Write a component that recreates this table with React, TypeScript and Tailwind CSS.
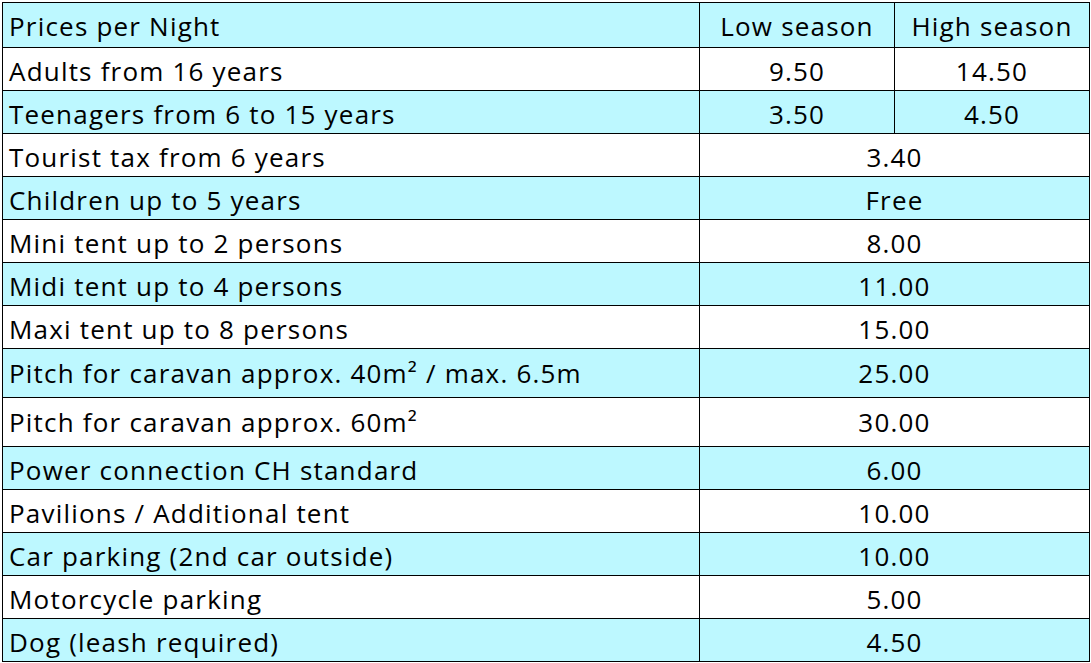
import React from "react";

type Row = { label: string; low: string; high?: string; tall?: boolean };

const rows: Row[] = [
  { label: "Adults from 16 years", low: "9.50", high: "14.50" },
  { label: "Teenagers from 6 to 15 years", low: "3.50", high: "4.50" },
  { label: "Tourist tax from 6 years", low: "3.40" },
  { label: "Children up to 5 years", low: "Free" },
  { label: "Mini tent up to 2 persons", low: "8.00" },
  { label: "Midi tent up to 4 persons", low: "11.00" },
  { label: "Maxi tent up to 8 persons", low: "15.00" },
  { label: "Pitch for caravan approx. 40m² / max. 6.5m", low: "25.00", tall: true },
  { label: "Pitch for caravan approx. 60m²", low: "30.00", tall: true },
  { label: "Power connection CH standard", low: "6.00" },
  { label: "Pavilions / Additional tent", low: "10.00" },
  { label: "Car parking (2nd car outside)", low: "10.00" },
  { label: "Motorcycle parking", low: "5.00" },
  { label: "Dog (leash required)", low: "4.50" },
];

export default function App() {
  return (
    <div className="min-h-screen bg-white pl-[2px] pt-[2px]">
      <div
        className="grid w-[1088px] grid-cols-[696px_194px_194px] gap-px bg-black p-px text-[26px] leading-[30px] tracking-[1.2px] text-black"
        style={{ fontFamily: "'Open Sans', 'Liberation Sans', sans-serif" }}
      >
        <div className="h-[44px] bg-[#bdf8ff] pl-[6px] pt-[8px]">Prices per Night</div>
        <div className="h-[44px] bg-[#bdf8ff] pt-[8px] text-center">Low season</div>
        <div className="h-[44px] bg-[#bdf8ff] pt-[8px] text-center">High season</div>
        {rows.map((r, i) => {
          const bg = i % 2 === 0 ? "bg-white" : "bg-[#bdf8ff]";
          const h = r.tall ? "h-[48px] pt-[9px]" : "h-[42px] pt-[8px]";
          return (
            <React.Fragment key={r.label}>
              <div className={`${bg} ${h} whitespace-nowrap pl-[6px]`}>{r.label}</div>
              {r.high ? (
                <>
                  <div className={`${bg} ${h} text-center`}>{r.low}</div>
                  <div className={`${bg} ${h} text-center`}>{r.high}</div>
                </>
              ) : (
                <div className={`${bg} ${h} col-span-2 text-center`}>{r.low}</div>
              )}
            </React.Fragment>
          );
        })}
      </div>
    </div>
  );
}
